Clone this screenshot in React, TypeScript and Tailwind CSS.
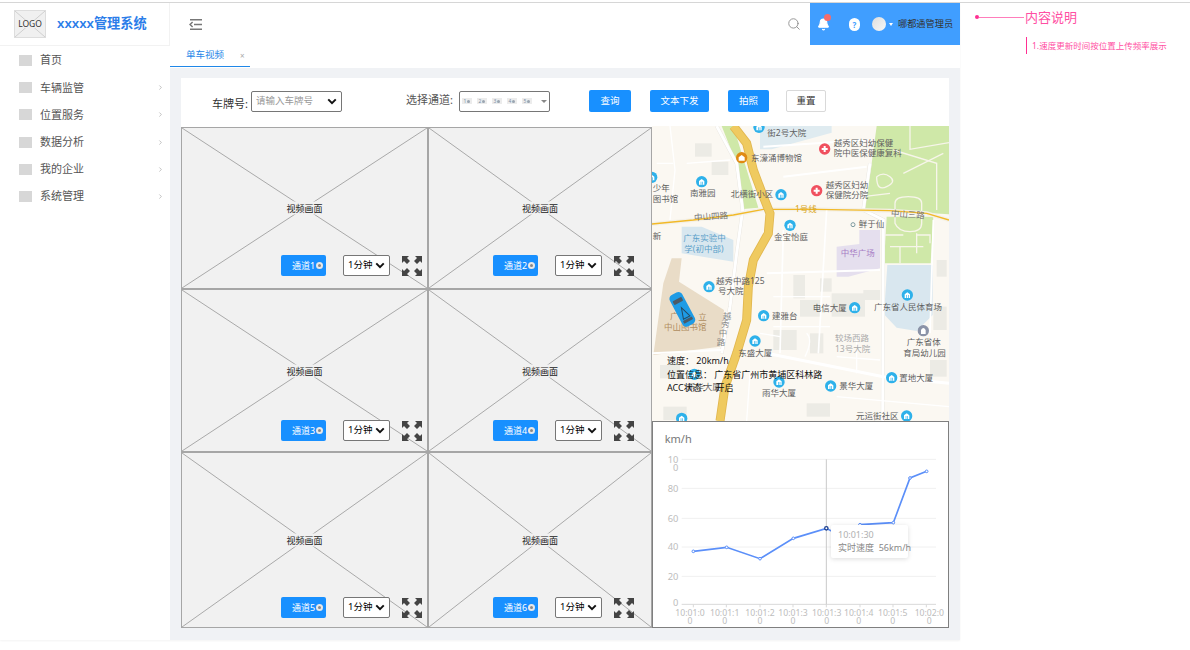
import { Bell, ChevronRight, Search } from 'lucide-react';

const menus = ['首页', '车辆监管', '位置服务', '数据分析', '我的企业', '系统管理'];

const cells = [
  { ch: 1, cls: 'h-[162px] pr-[5px] pb-[12px]' },
  { ch: 2, cls: 'h-[162px] pr-[17px] pb-[12px]' },
  { ch: 3, cls: 'h-[163px] pr-[5px] pb-[10px]' },
  { ch: 4, cls: 'h-[163px] pr-[17px] pb-[10px]' },
  { ch: 5, cls: 'h-[176px] pr-[5px] pb-[9px]' },
  { ch: 6, cls: 'h-[176px] pr-[17px] pb-[9px]' },
];

// map drawing uses the coordinates of the 3x crop, hence the large numbers
const bluePins = [
  [327, 22], [155, 185], [393, 224], [420, 316], [177, 500], [341, 587], [315, 663], [614, 563],
  [133, 763], [387, 786], [542, 798], [725, 773], [770, 888], [95, 895], [5, 172], [772, 525],
];

const mapLabels: [string, number, number, string?][] = [
  ['街2号大院', 352, 47],
  ['东濠涌博物馆', 303, 122],
  ['越秀区妇幼保健', 551, 79],
  ['院中医保健康复科', 551, 109],
  ['越秀区妇幼', 527, 204],
  ['保健院分院', 527, 235],
  ['少年', 8, 214],
  ['图书馆', 8, 247],
  ['南雅园', 120, 229],
  ['北横街小区', 242, 231],
  ['1号线', 435, 277, '#d9a520'],
  ['鲜于仙', 626, 322],
  ['金宝怡庭', 372, 361],
  ['广东实验中', 100, 364, '#5b9fc9'],
  ['学(初中部)', 103, 397, '#5b9fc9'],
  ['新', 8, 357],
  ['中华广场', 572, 407, '#a77cc4'],
  ['越秀中路125', 198, 493],
  ['号大院', 204, 523],
  ['电信大厦', 488, 572],
  ['广东省人民体育场', 672, 570],
  ['建雅台', 366, 596],
  ['广', 60, 596, '#b08d5f'],
  ['立', 145, 599, '#b08d5f'],
  ['中山图书馆', 42, 630, '#b08d5f'],
  ['较场西路', 555, 663, '#aaaaaa'],
  ['13号大院', 555, 697, '#aaaaaa'],
  ['东盛大厦', 265, 708],
  ['广东省体', 770, 675],
  ['育局幼儿园', 760, 707],
  ['置地大厦', 748, 782],
  ['景华大厦', 568, 806],
  ['雨华大厦', 336, 829],
  ['元运街社区', 618, 897],
  ['越', 218, 596, '#888888'],
  ['秀', 213, 622, '#888888'],
  ['中', 206, 648, '#888888'],
  ['路', 200, 674, '#888888'],
  ['新华大厦', 110, 809],
];

const speedData = '130,394 230,382 330,416 430,355 529,325 580,352 630,314 730,308 780,174 830,154';
const speedPoints = [
  [130, 394], [230, 382], [330, 416], [430, 355], [630, 314], [730, 308], [780, 174], [830, 154],
];
const xTicks = [
  [120, '10:01:0'], [224, '10:01:1'], [330, '10:01:2'], [429, '10:01:3'],
  [530, '10:01:3'], [626, '10:01:4'], [728, '10:01:5'], [838, '10:02:0'],
] as const;
const xLines = [130, 229, 330, 429, 529, 630, 729, 829];
const grid = [118, 205, 295, 381, 469];

function Chevron() {
  return (
    <svg viewBox="0 0 12 8" className="absolute right-[5px] top-[7px] w-[10px] h-[7px] pointer-events-none">
      <path d="M1.5 1.5 6 6l4.5-4.5" fill="none" stroke="#111" strokeWidth="2.4" />
    </svg>
  );
}

function Field({ value, cls, selectCls }: { value: string; cls: string; selectCls: string }) {
  return (
    <div className={`relative ${cls}`}>
      <select
        defaultValue={value}
        className={`block appearance-none w-full h-full border border-[#767676] rounded-[2px] bg-white ${selectCls}`}
      >
        <option>{value}</option>
      </select>
      <Chevron />
    </div>
  );
}

function ExpandIcon() {
  return (
    <svg viewBox="0 0 20 20" className="w-[20px] h-[20px] ml-[12px]" fill="#444">
      <path d="M0 0h7L5 2l3 3-3 3-3-3-2 2z" />
      <path d="M20 0h-7l2 2-3 3 3 3 3-3 2 2z" />
      <path d="M0 20h7l-2-2 3-3-3-3-3 3-2-2z" />
      <path d="M20 20h-7l2-2-3-3 3-3 3 3 2-2z" />
    </svg>
  );
}

function VideoCell({ ch, cls }: { ch: number; cls: string }) {
  return (
    <div className={`relative border border-[#a6a6a6] bg-[#f1f1f1] flex items-end justify-end ${cls}`}>
      <svg viewBox="0 0 100 100" preserveAspectRatio="none" className="absolute inset-0 w-full h-full">
        <path d="M0 0 100 100M100 0 0 100" stroke="#a9a9a9" strokeWidth="1" vectorEffect="non-scaling-stroke" fill="none" />
      </svg>
      <span className="absolute left-1/2 top-1/2 -translate-x-1/2 -translate-y-1/2 bg-[#f1f1f1] px-[1px] text-[9px] leading-[13px] text-[#222]">
        视频画面
      </span>
      <div className="relative flex items-center">
        <button className="w-[45px] h-[21px] rounded-[2px] bg-[#1890ff] text-white text-[9px] flex items-center pl-[11px]">
          通道{ch}
          <span className="ml-[1px] w-[7px] h-[7px] rounded-full bg-[#e8e8e8] flex items-center justify-center">
            <span className="w-[3px] h-[3px] rounded-full bg-[#888]" />
          </span>
        </button>
        <Field value="1分钟" cls="w-[47px] h-[21px] ml-[17px]" selectCls="text-[9.5px] text-black pl-[4px]" />
        <ExpandIcon />
      </div>
    </div>
  );
}

function Pin({ x, y }: { x: number; y: number }) {
  return (
    <g>
      <circle cx={x} cy={y} r="17" fill="#2eb1ea" />
      <path d={`M${x - 8} ${y + 9}v-11l8-6 8 6v11z`} fill="#fff" />
      <path d={`M${x - 3} ${y + 9}v-9h2v9zM${x + 2} ${y + 9}v-9h2v9z`} fill="#2eb1ea" />
    </g>
  );
}

function MapView() {
  return (
    <div className="relative h-[295px] bg-[#fbf8f2] overflow-hidden">
      <svg viewBox="6 18 891 885" className="absolute inset-0 w-full h-full">
        <rect x="6" y="18" width="891" height="885" fill="#fbf8f2" />
        {/* greens, water, blocks */}
        <path d="M215 18h35l75 245-45 4-20-135z" fill="#cfe8a8" />
        <path d="M680 18h217v265l-255-15 20-115z" fill="#cfe8a8" />
        <path d="M710 290h140l-8 140H702z" fill="#cfe8a8" />
        <path d="M712 435h136v150l-48 48-60-10-38-40z" fill="#d9e7ef" />
        <path d="M330 18h215v20l-180 50h-35z" fill="#dfebf0" />
        <path d="M95 320h60l95 40v65l-155-25z" fill="#d8e7ef" />
        <path d="M628 330h62v115l-95 25h-35v-90l68-8z" fill="#e5dfee" />
        <path d="M65 415h30l-8 70 135 85-12 110-200 25 30-215z" fill="#e9dcc7" />
        {[
          [135, 70, 50, 40], [185, 125, 50, 40], [430, 465, 35, 70], [510, 475, 35, 40],
          [545, 520, 100, 70], [450, 540, 60, 50], [370, 630, 70, 60], [480, 640, 40, 60],
          [860, 420, 30, 50], [850, 560, 40, 70], [30, 735, 60, 40], [640, 510, 50, 30],
          [40, 860, 70, 40], [840, 720, 50, 50], [470, 850, 70, 40],
        ].map(([x, y, w, h]) => (
          <rect key={`${x}-${y}`} x={x} y={y} width={w} height={h} fill="#ecebe5" />
        ))}
        {/* park paths */}
        <g fill="none" stroke="#f7f5ea" strokeWidth="4">
          <path d="M780 18v70l117-20" />
          <path d="M730 90 860 130V270" />
          <path d="M680 170q20-15 40 0t-10 30-30-30" />
          <path d="M735 250q0-20 40-20t40 20v60q0 25-35 25t-45-25z" />
          <path d="M700 345h60M800 345h40v25M720 380h100M750 380v50M800 340v60" />
          <path d="M640 230 720 220" />
          <path d="M880 100 760 160" />
        </g>
        {/* roads */}
        <g fill="none" stroke="#ffffff" strokeWidth="9">
          <path d="M200 18 260 130 278 270 260 400 240 560 215 700" stroke="#e6e3dc" strokeWidth="11" />
          <path d="M200 18 260 130 278 270 260 400 240 560 215 700" />
          <path d="M660 130 640 270 700 300 698 903" stroke="#e6e3dc" strokeWidth="11" />
          <path d="M660 130 640 270 700 300 698 903" />
          <path d="M6 312 130 300 250 285 340 268 500 268 720 272 830 280 897 300" strokeWidth="12" stroke="#f4f1e8" />
          <path d="M350 700 700 770 897 790" />
          <path d="M340 80 650 60" strokeWidth="6" />
          <path d="M400 170 650 140" strokeWidth="6" />
          <path d="M350 460 690 450" strokeWidth="6" />
          <path d="M6 700 215 690" strokeWidth="6" />
          <path d="M530 270 505 700" strokeWidth="5" />
          <path d="M400 330 390 700" strokeWidth="5" />
          <path d="M850 300 840 640" strokeWidth="5" />
          <path d="M60 18 75 150 60 300" strokeWidth="4" />
          <path d="M110 130 240 120M20 130h50" strokeWidth="4" />
          <path d="M370 530H540M370 620H540M330 640 390 650" strokeWidth="4" />
          <path d="M470 640q20 20-5 70M620 640V760M560 710 690 720" strokeWidth="4" />
          <path d="M300 760 290 903M560 830 897 860" strokeWidth="4" />
        </g>
        <path d="M6 312 130 300 250 285 340 268 500 268 720 272 830 280 897 300" fill="none" stroke="#f2b928" strokeWidth="4" />
        <path
          d="M250 18 290 70 310 150 340 230 360 280 355 340 310 420 295 500 290 600 260 700 225 800 210 903"
          fill="none"
          stroke="#e1b64e"
          strokeWidth="27"
        />
        <path
          d="M250 18 290 70 310 150 340 230 360 280 355 340 310 420 295 500 290 600 260 700 225 800 210 903"
          fill="none"
          stroke="#efca60"
          strokeWidth="22"
        />
        {/* pins */}
        {bluePins.map(([x, y]) => (
          <Pin key={`${x}-${y}`} x={x} y={y} />
        ))}
        <circle cx="275" cy="113" r="17" fill="#e08a12" />
        <path d="M266 122v-10l9-7 9 7v10z" fill="#fff" />
        {[[524, 87], [500, 212]].map(([x, y]) => (
          <g key={x}>
            <circle cx={x} cy={y} r="17" fill="#f0505f" />
            <path d={`M${x - 9} ${y}h18M${x} ${y - 9}v18`} stroke="#fff" strokeWidth="6" />
          </g>
        ))}
        <circle cx="820" cy="632" r="17" fill="#8b93a7" />
        <path d="M813 642v-12q7-12 14 0v12z" fill="#fff" />
        <circle cx="609" cy="314" r="6" fill="none" stroke="#7d9aa0" strokeWidth="3" />
        {/* labels */}
        <g fontSize="25.5" fill="#5f5f5f">
          {mapLabels.map(([t, x, y, c]) => (
            <text key={`${t}-${x}`} x={x} y={y} fill={c}>
              {t}
            </text>
          ))}
          <text x="133" y="302" transform="rotate(-4 133 302)" fill="#777">中山四路</text>
          <text x="722" y="289" transform="rotate(4 722 289)" fill="#777">中山三路</text>
        </g>
        {/* car */}
        <g transform="rotate(-28 97 568)">
          <rect x="76" y="515" width="42" height="106" rx="13" fill="#1e9be5" />
          <rect x="82" y="533" width="30" height="13" rx="3" fill="#4b5a66" />
          <path d="M97 562 86 596h22z" fill="none" stroke="#26495f" strokeWidth="3" />
          <rect x="82" y="600" width="30" height="9" rx="2" fill="#4b5a66" />
        </g>
      </svg>
      <div className="absolute left-[15px] top-[228px] text-[9px] leading-[13.5px] text-[#111]">
        <p>速度： 20km/h</p>
        <p>位置信息： 广东省广州市黄埔区科林路</p>
        <p>ACC状态：&nbsp;&nbsp;开启</p>
      </div>
    </div>
  );
}

function SpeedChart() {
  return (
    <div className="relative h-[207px] border border-[#7f7f7f] bg-white">
      <svg viewBox="9 6 885 615" className="absolute inset-0 w-full h-full">
        <text x="44" y="68" fontSize="33" fill="#777">km/h</text>
        {grid.map((y) => (
          <path key={y} d={`M95 ${y}H858`} stroke="#f0f0f0" strokeWidth="3" />
        ))}
        <path d="M95 553H858" stroke="#d9d9d9" strokeWidth="3" />
        {xLines.map((x) => (
          <path key={x} d={`M${x} 553v9`} stroke="#d9d9d9" strokeWidth="3" />
        ))}
        <path d="M529 118V553" stroke="#c9c9c9" strokeWidth="3" />
        <g fontSize="28" fill="#bdbdbd" textAnchor="end">
          <text x="85" y="128">10</text>
          <text x="85" y="153">0</text>
          <text x="85" y="215">80</text>
          <text x="85" y="305">60</text>
          <text x="85" y="391">40</text>
          <text x="85" y="479">20</text>
          <text x="85" y="558">0</text>
        </g>
        <g fontSize="26" fill="#bdbdbd" textAnchor="middle">
          {xTicks.map(([x, t], i) => (
            <g key={i}>
              <text x={x} y="587">{t}</text>
              <text x={x} y="611">0</text>
            </g>
          ))}
        </g>
        <polyline points={speedData} fill="none" stroke="#5b8ff9" strokeWidth="5" />
        {speedPoints.map(([x, y]) => (
          <circle key={x} cx={x} cy={y} r="4" fill="#fff" stroke="#5b8ff9" strokeWidth="3" />
        ))}
        <circle cx="529" cy="325" r="5" fill="#fff" stroke="#1c3f8f" strokeWidth="4" />
      </svg>
      <div className="absolute left-[178px] top-[103px] w-[77px] h-[33px] bg-white rounded-[2px] shadow-[0_1px_5px_rgba(0,0,0,0.14)] pl-[7px] pt-[3px] text-[9px] leading-[13px]">
        <p className="text-[#b0b0b0]">10:01:30</p>
        <p className="text-[#888] whitespace-nowrap">实时速度&nbsp;&nbsp;56km/h</p>
      </div>
    </div>
  );
}

export default function App() {
  return (
    <div className="w-[1190px] h-[650px] bg-white overflow-hidden font-['Noto_Sans','Noto_Sans_CJK_SC',sans-serif]">
      <div className="h-[3px] border-b border-[#d6d6d6]" />
      <div className="flex">
        <div className="w-[960px] h-[637px] flex shadow-[0_1px_2px_rgba(0,0,0,0.05)]">
          {/* sidebar */}
          <aside className="w-[170px] shrink-0 bg-white">
            <div className="h-[43px] flex items-center pl-[14px] border-b border-r border-[#f2f2f2]">
              <div className="relative w-[32px] h-[28px] border border-[#dddddd] bg-[#f0f0f0] flex items-center justify-center">
                <svg viewBox="0 0 100 100" preserveAspectRatio="none" className="absolute inset-0 w-full h-full">
                  <path d="M0 0 100 100M100 0 0 100" stroke="#cfcfcf" strokeWidth="1" vectorEffect="non-scaling-stroke" />
                </svg>
                <span className="relative text-[8.5px] text-[#333] bg-[#f0f0f0] leading-none">LOGO</span>
              </div>
              <h1 className="ml-[11px] text-[13.2px] font-semibold text-[#2b7de9] whitespace-nowrap">xxxxx管理系统</h1>
            </div>
            <nav className="pt-[1px]">
              {menus.map((m, i) => (
                <div key={m} className="h-[27.2px] flex items-center pl-[19px] pr-[6px]">
                  <span className="w-[13px] h-[11px] bg-[#d7d7d7]" />
                  <span className="ml-[8px] text-[11px] text-[#555] flex-1">{m}</span>
                  {i > 0 && <ChevronRight size={7} className="text-[#999]" />}
                </div>
              ))}
            </nav>
          </aside>

          <main className="w-[790px] flex flex-col">
            {/* header */}
            <header className="h-[42px] flex items-center">
              <svg viewBox="0 0 14 11" className="ml-[19px] w-[14px] h-[11px]" fill="none" stroke="#777" strokeWidth="1.5">
                <path d="M1 .8h12M5 5.5h8M1 10.2h12" />
                <path d="M3.6 3 1 5.5 3.6 8" />
              </svg>
              <Search size={14} strokeWidth={1.5} className="ml-auto mr-[9px] text-[#8a8a8a]" />
              <div className="w-[150px] h-full bg-[#409eff] flex items-center relative">
                <div className="relative ml-[7px] mt-[1px]">
                  <Bell size={13} fill="#fff" className="text-white" />
                  <span className="absolute -top-[4px] left-[7px] w-[7px] h-[7px] rounded-full bg-[#f56c6c]" />
                </div>
                <span className="ml-[19px] w-[11px] h-[13px] rounded-full bg-white text-[#409eff] text-[8px] font-bold leading-[13px] text-center">?</span>
                <span className="ml-[12px] w-[14px] h-[14px] rounded-full bg-gradient-to-br from-[#dddddd] to-[#f8f8f8]" />
                <span className="ml-[3px] border-x-[2.5px] border-x-transparent border-t-[3px] border-t-white" />
                <span className="ml-[5px] text-[9.2px] text-[#333] whitespace-nowrap">哪都通管理员</span>
              </div>
            </header>
            {/* tabs */}
            <div className="h-[23px]">
              <div className="w-[80px] h-[22px] border-b-[1px] border-[#1f87e8] flex items-center pl-[16px]">
                <span className="text-[9.5px] text-[#1f87e8]">单车视频</span>
                <span className="ml-[16px] text-[8px] text-[#aaa]">×</span>
              </div>
            </div>
            {/* content */}
            <section className="flex-1 bg-[#f0f2f5] pt-[10px] px-[11px]">
              <div className="bg-white w-[768px]">
                <div className="h-[48px] flex items-center pl-[31px] text-[11px] text-[#333]">
                  <span className="w-[39px] whitespace-nowrap mt-[5px]">车牌号:</span>
                  <Field value="请输入车牌号" cls="w-[91px] h-[21px] mt-[-2px]" selectCls="text-[9.5px] text-[#999] pl-[4px]" />
                  <span className="ml-[64px] w-[53px] whitespace-nowrap text-[#555] mt-[-3px]">选择通道:</span>
                  <div className="w-[91px] h-[21px] mt-[-2px] border border-[#767676] rounded-[2px] flex items-center pl-[2px] gap-[5px] relative">
                    {[1, 2, 3, 4, 5].map((n) => (
                      <span key={n} className="w-[10px] h-[6px] bg-[#ececec] flex items-center justify-center gap-px text-[5px] leading-[6px] text-[#7a8fa5]">
                        {n}
                        <span className="w-[3px] h-[3px] rounded-full bg-[#9aa5b1]" />
                      </span>
                    ))}
                    <span className="absolute right-[2px] top-[8px] border-x-[3px] border-x-transparent border-t-[3px] border-t-[#888]" />
                  </div>
                  <button className="ml-[39px] w-[42px] h-[22px] mt-[-2px] rounded-[2px] bg-[#1890ff] text-white text-[9.5px]">查询</button>
                  <button className="ml-[19px] w-[59px] h-[22px] mt-[-2px] rounded-[2px] bg-[#1890ff] text-white text-[9.5px]">文本下发</button>
                  <button className="ml-[19px] w-[41px] h-[22px] mt-[-2px] rounded-[2px] bg-[#1890ff] text-white text-[9.5px]">拍照</button>
                  <button className="ml-[17px] w-[40px] h-[22px] mt-[-2px] rounded-[2px] border border-[#d9d9d9] bg-white text-[#333] text-[9.5px]">重置</button>
                </div>
                <div className="flex">
                  <div className="w-[471px] mt-[1px] grid grid-cols-[247px_224px] content-start">
                    {cells.map((c) => (
                      <VideoCell key={c.ch} ch={c.ch} cls={c.cls} />
                    ))}
                  </div>
                  <div className="w-[297px]">
                    <MapView />
                    <SpeedChart />
                  </div>
                </div>
              </div>
            </section>
          </main>
        </div>

        {/* annotation */}
        <aside className="flex-1 text-[#ff4fa3]">
          <div className="flex items-center pl-[15px] h-[26px] mt-[1px]">
            <span className="w-[4px] h-[4px] rounded-full bg-[#ff2f92]" />
            <span className="w-[45px] h-px bg-[#ff7dbb]" />
            <span className="text-[13px] leading-none ml-px">内容说明</span>
          </div>
          <div className="ml-[66px] mt-[7px] h-[17px] border-l border-[#ff2f92] pl-[5px] text-[8.5px] leading-[17px] whitespace-nowrap">
            1.速度更新时间按位置上传频率展示
          </div>
        </aside>
      </div>
    </div>
  );
}
